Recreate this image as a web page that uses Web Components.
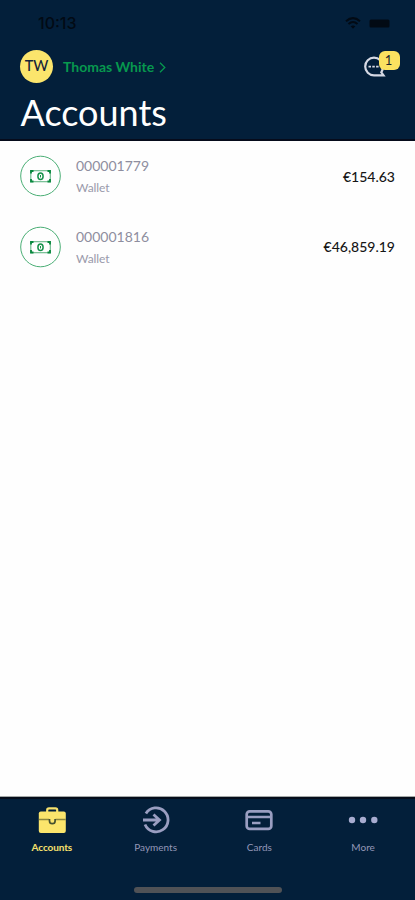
<!DOCTYPE html>
<html lang="en"><head><meta charset="utf-8"><title>Accounts</title>
<style>html,body{margin:0;height:100%;background:#fefefe}body{font-family:Lato,"Liberation Sans",sans-serif}</style></head>
<body><bank-app></bank-app>
<script>
const define = (name, html) => customElements.define(name, class extends HTMLElement {
  constructor() {
    super();
    const t = document.createElement('template');
    t.innerHTML = html;
    this.attachShadow({mode: 'open'}).append(t.content.cloneNode(true));
  }
});

define('status-bar', `<style>
:host{display:flex;justify-content:space-between;align-items:center;height:46px;box-sizing:border-box;padding:0 25px 0 38px;color:#020a14;font:500 16px/46px Inter,sans-serif}
.icons{display:flex;align-items:center;gap:8px}svg{display:block}
</style><span><slot></slot></span><span class="icons">
<svg width="16" height="12" viewBox="0 0 16 12" fill="none" stroke="currentColor" stroke-width="2"><path d="M1 4.2Q8-2 15 4.2M3.5 7Q8 3 12.500 7"/><path d="M8 11.800L5.700 9.300Q8 7.500 10.300 9.300Z" fill="currentColor" stroke="none"/></svg>
<svg width="21" height="9"><rect x=".5" y=".5" width="20" height="8" rx="1.500" fill="currentColor"/></svg></span>`);

define('user-chip', `<style>
:host{display:flex;align-items:center;color:#07984e;font-size:14px;font-weight:700;line-height:20px}
.av{width:33px;height:33px;border-radius:50%;background:#fbe56c;color:#14233a;display:grid;place-items:center;font-size:14.500px;font-weight:500;line-height:33px;margin-right:10px}
.av span{margin-top:-2px}
svg{margin-left:5px;margin-top:2px}
</style><span class="av"><span><slot name="initials"></slot></span></span><span class="n"><slot></slot></span>
<svg width="7" height="11" viewBox="0 0 7 11" fill="none" stroke="currentColor" stroke-width="1.300"><path d="M1 .8L5.800 5.500L1 10.200"/></svg>`);

define('chat-button', `<style>
:host{display:block;position:relative;width:37px;height:27px}
svg{display:block}
.badge{position:absolute;left:16px;top:0;width:21px;height:19px;border-radius:6px;background:#fbe260;color:#23242c;font:400 13px/19px Lato,sans-serif;text-align:center;text-indent:-2px}
</style><svg width="37" height="27" viewBox="0 0 37 27" fill="none" stroke="#d6d9e4" stroke-width="2.200"><path d="M11 6.700A8.800 8.800 0 1 0 11 24.300H20.500L18.300 21.300C19.500 19.500 20 17.500 19.800 15.500A8.800 8.800 0 0 0 11 6.700Z"/><path d="M5.500 15.600H17" stroke-dasharray="2.500 1.300" stroke-width="1.800"/></svg>
<span class="badge"><slot></slot></span>`);

define('app-header', `<style>
:host{display:block;height:141px;box-sizing:border-box;background:#031f3a;border-bottom:2px solid #060b1b}
.row{display:flex;justify-content:space-between;align-items:center;height:41px;padding:0 15px 0 20px}
h1{margin:0;padding-left:20.500px;margin-top:4px;font-size:36px;line-height:42px;font-weight:400;color:#fff}
chat-button{margin-top:-5px}
</style><status-bar>10:13</status-bar>
<div class="row"><user-chip><span slot="initials">TW</span>Thomas White</user-chip><chat-button>1</chat-button></div>
<h1><slot></slot></h1>`);

define('account-row', `<style>
:host{display:flex;align-items:center;height:70.500px;padding:0 20px}
svg{display:block;margin-right:15px;flex:none}
.t{flex:1;display:flex;flex-direction:column;padding-top:1px}
.num{font-size:14px;line-height:20px;color:#8e8e9f}
.type{font-size:12px;line-height:18px;color:#9a9aab;margin-top:3px;letter-spacing:-.1px}
.amt{font-size:14px;line-height:20px;color:#161616;font-weight:500;padding-top:1px}
</style><svg width="41" height="42" viewBox="0 0 41 42" fill="none" stroke="#4aae75"><circle cx="20.500" cy="21" r="19.800" stroke-width="1"/><rect x="10.800" y="15.700" width="19.500" height="11" stroke-width="1.100" stroke="#66b787"/><path d="M11 18.500V16h2.500M27.500 16H30v2.500M30 24v2.500h-2.500M13.500 26.500H11V24" stroke="#08883e" stroke-width="1.800"/><ellipse cx="20.500" cy="21.200" rx="2.600" ry="3.300" stroke="#16914a" stroke-width="1.500"/><path d="M20.500 20v2.400" stroke="#16914a"/></svg>
<div class="t"><span class="num"><slot name="number"></slot></span><span class="type"><slot name="type"></slot></span></div><span class="amt"><slot></slot></span>`);

define('tab-item', `<style>
:host{display:flex;flex-direction:column;align-items:center;color:#9397b8;font-size:10px;line-height:14px}
:host([active]){color:#f6e16d;font-weight:700;letter-spacing:-.1px}
.i{height:30px;display:grid;place-items:center;margin-bottom:5px}
</style><span class="i"><slot name="icon"></slot></span><span><slot></slot></span>`);

define('tab-bar', `<style>
:host{display:flex;flex-direction:column;height:104px;box-sizing:border-box;background:#031f3a;border-top:1px solid #a5a9a8;box-shadow:inset 0 2px #050d1b}
nav{display:grid;grid-template-columns:repeat(4,1fr);padding-top:8px;flex:1}
.home{width:148px;height:6px;border-radius:3px;background:#505256;margin:0 auto 7px}
svg{display:block}
</style><nav>
<tab-item active><svg slot="icon" width="28" height="28" viewBox="0 0 28 28"><path d="M9.200 6V4Q9.200 2.300 11 2.300h6.500Q19.200 2.300 19.200 4V6" fill="none" stroke="#f6e16d" stroke-width="2.200"/><rect x=".8" y="5.500" width="27" height="21.500" rx="2" fill="#fbe56c"/><path d="M1 13.500H11M17.500 13.500H27.800" stroke="#8d883f" stroke-width="1.400"/><path d="M11.500 13v2q0 2.700 2.800 2.700t2.800-2.700v-2" fill="none" stroke="#45502f" stroke-width="1.700"/></svg>Accounts</tab-item>
<tab-item><svg slot="icon" width="28" height="28" viewBox="0 0 28 28" fill="none" stroke="#9a9ec1" stroke-width="2.800"><path d="M3.900 7.400A12 12 0 1 1 3 18.500M1 14H17.500M11.500 8.500L17.500 14L11.500 19.500"/></svg>Payments</tab-item>
<tab-item><svg slot="icon" width="28" height="22" viewBox="0 0 28 22" fill="none" stroke="#9a9ec1"><rect x="1.700" y="2.300" width="24.600" height="17.600" rx="3" stroke-width="2.700"/><path d="M2 8h24M7 14h8.500" stroke-width="2.500"/></svg>Cards</tab-item>
<tab-item><svg slot="icon" width="30" height="8" viewBox="0 0 30 8" fill="#a8acd0"><circle cx="4" cy="4" r="3.200"/><circle cx="15" cy="4" r="3.200"/><circle cx="26.300" cy="4" r="3.200"/></svg>More</tab-item>
</nav><div class="home"></div>`);

define('bank-app', `<style>
:host{display:flex;flex-direction:column;width:415px;height:900px;background:#fefefe;overflow:hidden}
main{flex:1}app-header,tab-bar{flex:none}
</style><app-header>Accounts</app-header><main>
<account-row><span slot="number">000001779</span><span slot="type">Wallet</span>€154.63</account-row>
<account-row><span slot="number">000001816</span><span slot="type">Wallet</span>€46,859.19</account-row>
</main><tab-bar></tab-bar>`);
</script></body></html>
